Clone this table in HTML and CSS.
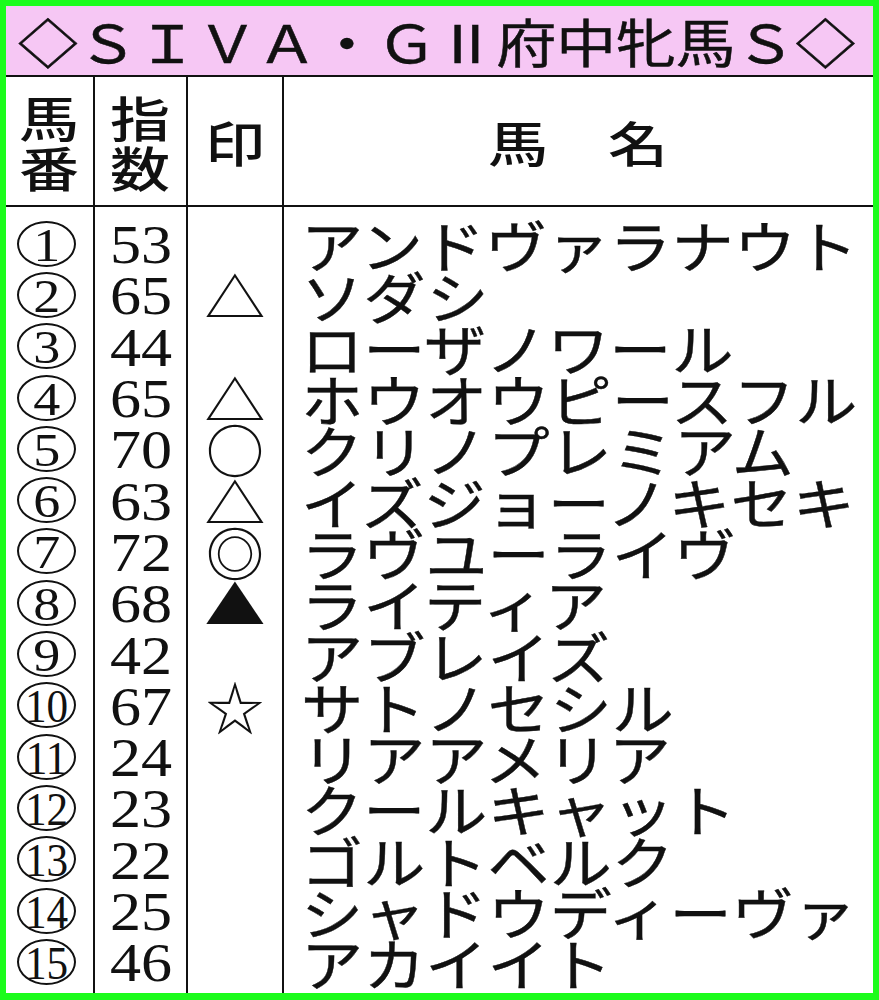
FILE: index.html
```html
<!DOCTYPE html>
<html lang="ja">
<head>
<meta charset="utf-8">
<title>SIVA・GⅡ府中牝馬S</title>
<link rel="stylesheet" href="styles.css">
</head>
<body>
<div class="frame">
  <div class="title"><span class="tt">◇ＳＩＶＡ・ＧⅡ府中牝馬Ｓ◇</span></div>
  <div class="table">
    <div class="cell head"><span class="hd">馬<br>番</span></div>
    <div class="cell head"><span class="hd">指<br>数</span></div>
    <div class="cell head"><span class="hd">印</span></div>
    <div class="cell head last"><span class="hd">馬　名</span></div>

    <div class="cell body nos">
      <div class="row"><span class="circ"><span class="d">1</span></span></div>
      <div class="row"><span class="circ"><span class="d">2</span></span></div>
      <div class="row"><span class="circ"><span class="d">3</span></span></div>
      <div class="row"><span class="circ"><span class="d">4</span></span></div>
      <div class="row"><span class="circ"><span class="d">5</span></span></div>
      <div class="row"><span class="circ"><span class="d">6</span></span></div>
      <div class="row"><span class="circ"><span class="d">7</span></span></div>
      <div class="row"><span class="circ"><span class="d">8</span></span></div>
      <div class="row"><span class="circ"><span class="d">9</span></span></div>
      <div class="row"><span class="circ"><span class="d dd">10</span></span></div>
      <div class="row"><span class="circ"><span class="d dd">11</span></span></div>
      <div class="row"><span class="circ"><span class="d dd">12</span></span></div>
      <div class="row"><span class="circ"><span class="d dd">13</span></span></div>
      <div class="row"><span class="circ"><span class="d dd">14</span></span></div>
      <div class="row"><span class="circ"><span class="d dd">15</span></span></div>
    </div>
    <div class="cell body idx">
      <div class="row"><span class="n">53</span></div>
      <div class="row"><span class="n">65</span></div>
      <div class="row"><span class="n">44</span></div>
      <div class="row"><span class="n">65</span></div>
      <div class="row"><span class="n">70</span></div>
      <div class="row"><span class="n">63</span></div>
      <div class="row"><span class="n">72</span></div>
      <div class="row"><span class="n">68</span></div>
      <div class="row"><span class="n">42</span></div>
      <div class="row"><span class="n">67</span></div>
      <div class="row"><span class="n">24</span></div>
      <div class="row"><span class="n">23</span></div>
      <div class="row"><span class="n">22</span></div>
      <div class="row"><span class="n">25</span></div>
      <div class="row"><span class="n">46</span></div>
    </div>
    <div class="cell body marks">
      <div class="row"></div>
      <div class="row"><span class="m tri">△</span></div>
      <div class="row"></div>
      <div class="row"><span class="m tri">△</span></div>
      <div class="row"><span class="m">○</span></div>
      <div class="row"><span class="m tri">△</span></div>
      <div class="row"><span class="m">◎</span></div>
      <div class="row"><span class="m tri">▲</span></div>
      <div class="row"></div>
      <div class="row"><span class="m">☆</span></div>
      <div class="row"></div>
      <div class="row"></div>
      <div class="row"></div>
      <div class="row"></div>
      <div class="row"></div>
    </div>
    <div class="cell body names last">
      <div class="row"><span class="nm">アンドヴァラナウト</span></div>
      <div class="row"><span class="nm">ソダシ</span></div>
      <div class="row"><span class="nm">ローザノワール</span></div>
      <div class="row"><span class="nm">ホウオウピースフル</span></div>
      <div class="row"><span class="nm">クリノプレミアム</span></div>
      <div class="row"><span class="nm">イズジョーノキセキ</span></div>
      <div class="row"><span class="nm">ラヴユーライヴ</span></div>
      <div class="row"><span class="nm">ライティア</span></div>
      <div class="row"><span class="nm">アブレイズ</span></div>
      <div class="row"><span class="nm">サトノセシル</span></div>
      <div class="row"><span class="nm">リアアメリア</span></div>
      <div class="row"><span class="nm">クールキャット</span></div>
      <div class="row"><span class="nm">ゴルトベルク</span></div>
      <div class="row"><span class="nm">シャドウディーヴァ</span></div>
      <div class="row"><span class="nm">アカイイト</span></div>
    </div>
  </div>
</div>
</body>
</html>
```
FILE: styles.css
```css
html, body {
  margin: 0;
  padding: 0;
  background: #ffffff;
}

.frame {
  width: 879px;
  height: 1000px;
  box-sizing: border-box;
  border: 6px solid #1cfc1c;
  border-bottom-width: 7px;
  background: #ffffff;
  display: flex;
  flex-direction: column;
  color: #111111;
  font-family: "Noto Sans CJK JP", "Noto Sans", sans-serif;
}

.title {
  height: 69px;
  flex: none;
  background: #f6c7f4;
  border-bottom: 2px solid #111111;
  display: flex;
  align-items: center;
  padding-left: 12px;
}

.tt {
  display: inline-block;
  font-size: 52px;
  line-height: 69px;
  font-weight: 400;
  -webkit-text-stroke: 0.5px #111111;
  white-space: nowrap;
  transform: scaleX(1.15);
  transform-origin: left center;
}

.table {
  flex: 1;
  display: grid;
  grid-template-columns: 89px 93px 96px 1fr;
  grid-template-rows: 130px 1fr;
}

.cell {
  box-sizing: border-box;
  border-right: 2px solid #111111;
}

.cell.last {
  border-right: none;
}

.head {
  border-bottom: 2px solid #111111;
  display: flex;
  align-items: center;
  justify-content: center;
}

.hd {
  display: inline-block;
  font-size: 48px;
  line-height: 50px;
  font-weight: 500;
  text-align: center;
  transform: scaleX(1.25);
  white-space: nowrap;
}

.body {
  padding-top: 11px;
}

.row {
  height: 51.3px;
  display: flex;
  align-items: center;
  justify-content: center;
  white-space: nowrap;
}

.nos .row {
  padding-right: 6px;
}

.circ {
  width: 59px;
  height: 46px;
  box-sizing: border-box;
  border: 2px solid #111111;
  border-radius: 50%;
  display: flex;
  align-items: center;
  justify-content: center;
  font-family: "Liberation Serif", serif;
  font-size: 47px;
  line-height: 42px;
}

.d {
  display: inline-block;
  transform: scaleX(1.15);
  padding-top: 2px;
}

.d.dd {
  transform: scaleX(0.92);
}

.n {
  display: inline-block;
  font-family: "Liberation Serif", serif;
  font-size: 54px;
  line-height: 51px;
  transform: scaleX(1.15);
  padding-top: 4px;
}

.m {
  display: inline-block;
  font-size: 58px;
  line-height: 51px;
}

.m.tri {
  transform: scale(1.05, 0.9);
}

.names .row {
  justify-content: flex-start;
  padding-left: 17px;
}

.nm {
  display: inline-block;
  font-size: 56px;
  line-height: 51px;
  font-weight: 400;
  -webkit-text-stroke: 0.4px #111111;
  transform: scaleX(1.11);
  transform-origin: left center;
}
```
